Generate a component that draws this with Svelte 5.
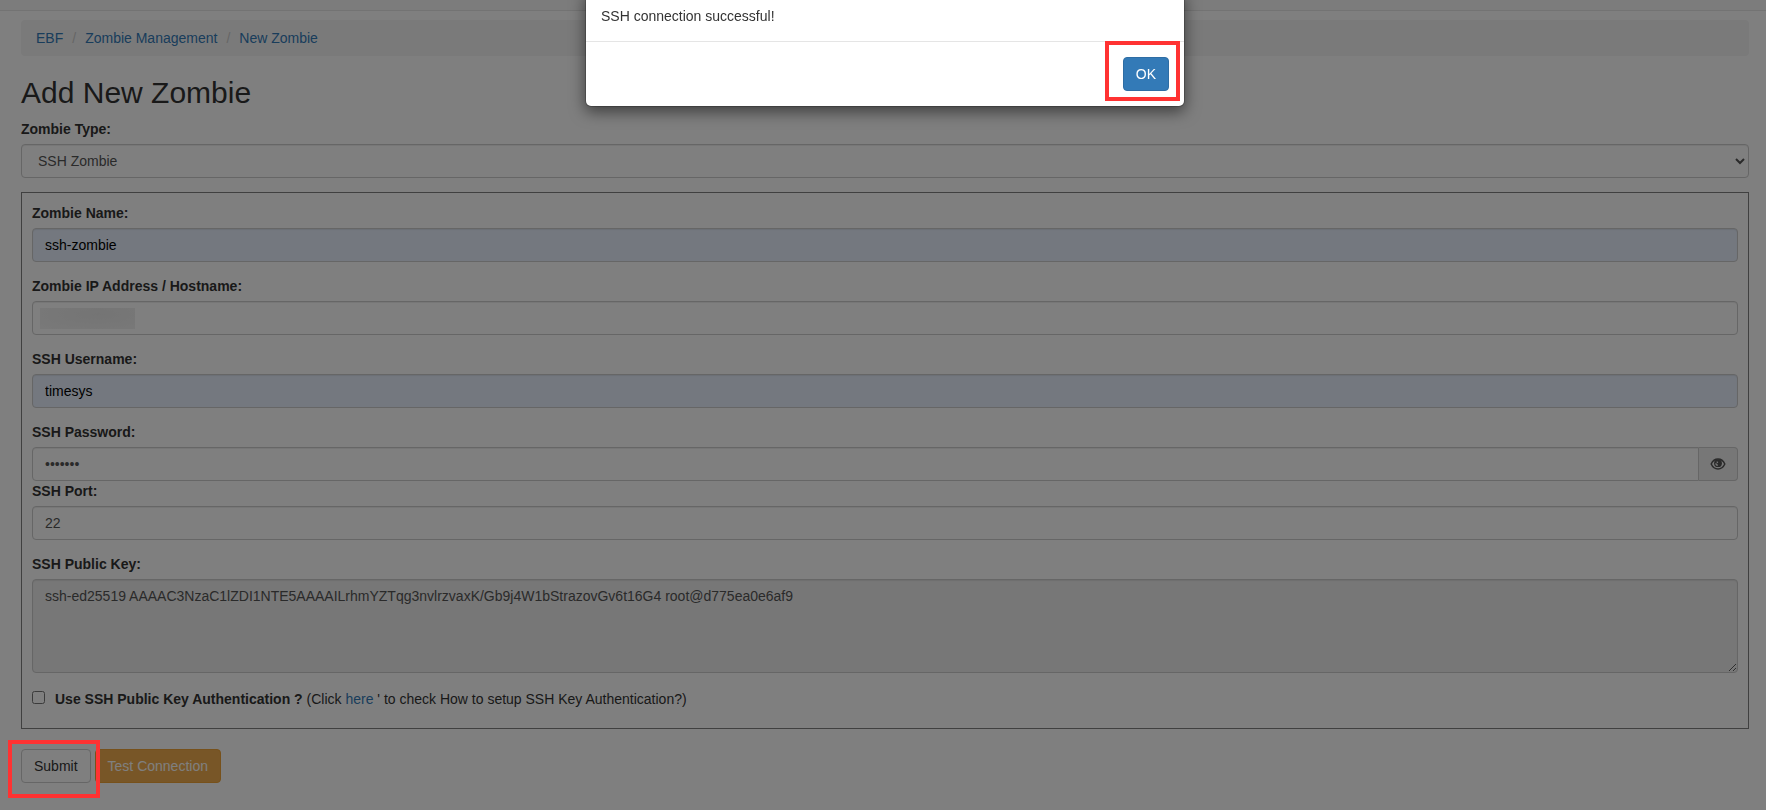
<script lang="ts">
  let zombieType = $state('ssh');
  let name = $state('ssh-zombie');
  let host = $state('');
  let username = $state('timesys');
  let password = $state('timesys');
  let port = $state('22');
  let publicKey = $state(
    'ssh-ed25519 AAAAC3NzaC1lZDI1NTE5AAAAILrhmYZTqg3nvlrzvaxK/Gb9j4W1bStrazovGv6t16G4 root@d775ea0e6af9'
  );
  let useKeyAuth = $state(false);
  let showPassword = $state(false);
  let alertOpen = $state(true);

  const crumbs = ['EBF', 'Zombie Management', 'New Zombie'];
</script>

<header class="navbar"></header>

<main class="container">
  <ol class="breadcrumb">
    {#each crumbs as crumb (crumb)}
      <li><a href="#top">{crumb}</a></li>
    {/each}
  </ol>

  <h2>Add New Zombie</h2>

  <form onsubmit={(e) => e.preventDefault()}>
    <div class="form-group">
      <label for="type">Zombie Type:</label>
      <select id="type" class="form-control" bind:value={zombieType}>
        <option value="ssh">SSH Zombie</option>
      </select>
    </div>

    <div class="panel">
      <div class="form-group">
        <label for="name">Zombie Name:</label>
        <input id="name" class="form-control filled" type="text" bind:value={name} />
      </div>
      <div class="form-group">
        <label for="host">Zombie IP Address / Hostname:</label>
        <div class="host">
          <input id="host" class="form-control" type="text" bind:value={host} />
          <span class="redacted"></span>
        </div>
      </div>
      <div class="form-group">
        <label for="username">SSH Username:</label>
        <input id="username" class="form-control filled" type="text" bind:value={username} />
      </div>
      <div class="form-group tight">
        <label for="password">SSH Password:</label>
        <div class="input-group">
          <input
            id="password"
            class="form-control"
            type={showPassword ? 'text' : 'password'}
            bind:value={password}
          />
          <button
            type="button"
            class="addon"
            aria-label="Show password"
            onclick={() => (showPassword = !showPassword)}
          >
            <svg viewBox="0 0 16 14" width="16" height="14" fill="none" stroke="currentColor" aria-hidden="true">
              <path stroke-width="1.5" d="M1.2 7C2.600 3.900 5 2 8 2s5.400 1.900 6.800 5C13.400 10.100 11 12 8 12S2.600 10.100 1.200 7z" />
              <circle cx="8" cy="6.2" r="3.9" fill="currentColor" stroke="none" />
              <path stroke="#eee" stroke-width="1.200" d="M5.900 6.200c0 1.200.900 2 2 2M6.800 4.600l1 1.200" />
            </svg>
          </button>
        </div>
      </div>
      <div class="form-group">
        <label for="port">SSH Port:</label>
        <input id="port" class="form-control" type="text" bind:value={port} />
      </div>
      <div class="form-group">
        <label for="key">SSH Public Key:</label>
        <textarea id="key" class="form-control" rows="4" readonly bind:value={publicKey}></textarea>
      </div>
      <div class="check">
        <input id="keyauth" type="checkbox" bind:checked={useKeyAuth} />
        <span>
          <label for="keyauth">Use SSH Public Key Authentication ?</label>
          (Click <a href="#setup">here</a> ' to check How to setup SSH Key Authentication?)
        </span>
      </div>
    </div>

    <div class="actions">
      <span class="marked">
        <button type="submit" class="btn btn-default">Submit</button>
        <span class="highlight submit-highlight"></span>
      </span>
      <button type="button" class="btn btn-warning">Test Connection</button>
    </div>
  </form>
</main>

{#if alertOpen}
  <div class="backdrop"></div>
  <div class="modal" role="dialog" aria-modal="true" aria-label="Connection result">
    <div class="modal-content">
      <div class="modal-body">SSH connection successful!</div>
      <div class="modal-footer">
        <span class="marked">
          <button type="button" class="btn btn-primary" onclick={() => (alertOpen = false)}>OK</button>
          <span class="highlight ok-highlight"></span>
        </span>
      </div>
    </div>
  </div>
{/if}

<style>
  :global(body) {
    margin: 0;
    background: #fff;
    color: #333;
    font: 14px/20px 'Liberation Sans', Arial, sans-serif;
  }
  :global(*) {
    box-sizing: border-box;
  }
  a {
    color: #337ab7;
    text-decoration: none;
  }
  .navbar {
    height: 11px;
    background: #f8f8f8;
    border-bottom: 1px solid #e7e7e7;
  }
  .container {
    padding: 9px 17px 20px 21px;
  }
  .breadcrumb {
    display: flex;
    margin: 0 0 20px;
    padding: 8px 15px;
    list-style: none;
    background: #f5f5f5;
    border-radius: 4px;
  }
  .breadcrumb li + li::before {
    content: '/';
    padding: 0 9px;
    color: #ccc;
  }
  h2 {
    margin: 0 0 10px;
    font-size: 30px;
    font-weight: 500;
    line-height: 33px;
  }
  .form-group {
    margin-bottom: 14px;
  }
  .form-group.tight {
    margin-bottom: 0;
  }
  label {
    font-weight: 700;
  }
  .form-group > label {
    display: block;
    margin-bottom: 5px;
  }
  .form-control {
    display: block;
    width: 100%;
    height: 34px;
    margin: 0;
    padding: 6px 12px;
    font: inherit;
    color: #555;
    background-color: #fff;
    border: 1px solid #ccc;
    border-radius: 4px;
    box-shadow: inset 0 1px 1px rgba(0, 0, 0, 0.075);
  }
  .filled {
    color: #000;
    background-color: #e8f0fe;
  }
  textarea.form-control {
    height: 94px;
    resize: vertical;
    background-color: #eee;
  }
  .panel {
    padding: 10px 10px 19px;
    border: 1px solid #808080;
  }
  .host {
    position: relative;
  }
  .redacted {
    position: absolute;
    left: 8px;
    top: 7px;
    width: 95px;
    height: 21px;
    background: radial-gradient(ellipse at 60% 30%, #e9e9e9, #f3f3f3);
  }
  .input-group {
    display: flex;
  }
  .input-group .form-control {
    flex: 1;
    border-radius: 4px 0 0 4px;
  }
  .addon {
    display: flex;
    align-items: center;
    justify-content: center;
    width: 39px;
    padding: 0;
    color: #555;
    background: #eee;
    border: 1px solid #ccc;
    border-left: 0;
    border-radius: 0 4px 4px 0;
  }
  .check {
    display: flex;
    align-items: flex-start;
    gap: 10px;
    padding-top: 2px;
  }
  .check input {
    width: 13px;
    height: 13px;
    margin: 2px 0 0;
  }
  .actions {
    display: flex;
    gap: 4px;
    margin-top: 20px;
  }
  .btn {
    display: block;
    height: 34px;
    padding: 6px 12px;
    font: inherit;
    border: 1px solid transparent;
    border-radius: 4px;
    cursor: pointer;
  }
  .btn-default {
    color: #333;
    background: #fff;
    border-color: #ccc;
  }
  .btn-warning {
    color: #fff;
    background: #f0ad4e;
    border-color: #eea236;
  }
  .btn-primary {
    color: #fff;
    background: #337ab7;
    border-color: #2e6da4;
  }
  .marked {
    position: relative;
  }
  .backdrop {
    position: fixed;
    inset: 0;
    z-index: 1;
    background: rgba(0, 0, 0, 0.5);
  }
  /* sits above the backdrop so the marked button stands out */
  .highlight {
    position: absolute;
    z-index: 2;
    border: 4px solid #ff3232;
    pointer-events: none;
  }
  .submit-highlight {
    inset: -9px -9px -15px -13px;
  }
  .ok-highlight {
    inset: -16px -11px -10px -18px;
  }
  .modal {
    position: fixed;
    inset: 0;
    z-index: 3;
    padding-left: 4px;
  }
  .modal-content {
    max-width: 600px;
    margin: -10px auto 0;
    background: #fff;
    background-clip: padding-box;
    border: 1px solid rgba(0, 0, 0, 0.2);
    border-radius: 6px;
    box-shadow: 0 5px 15px rgba(0, 0, 0, 0.5);
  }
  .modal-body {
    padding: 15px;
  }
  .modal-footer {
    display: flex;
    justify-content: flex-end;
    padding: 15px;
    border-top: 1px solid #e5e5e5;
  }
</style>
